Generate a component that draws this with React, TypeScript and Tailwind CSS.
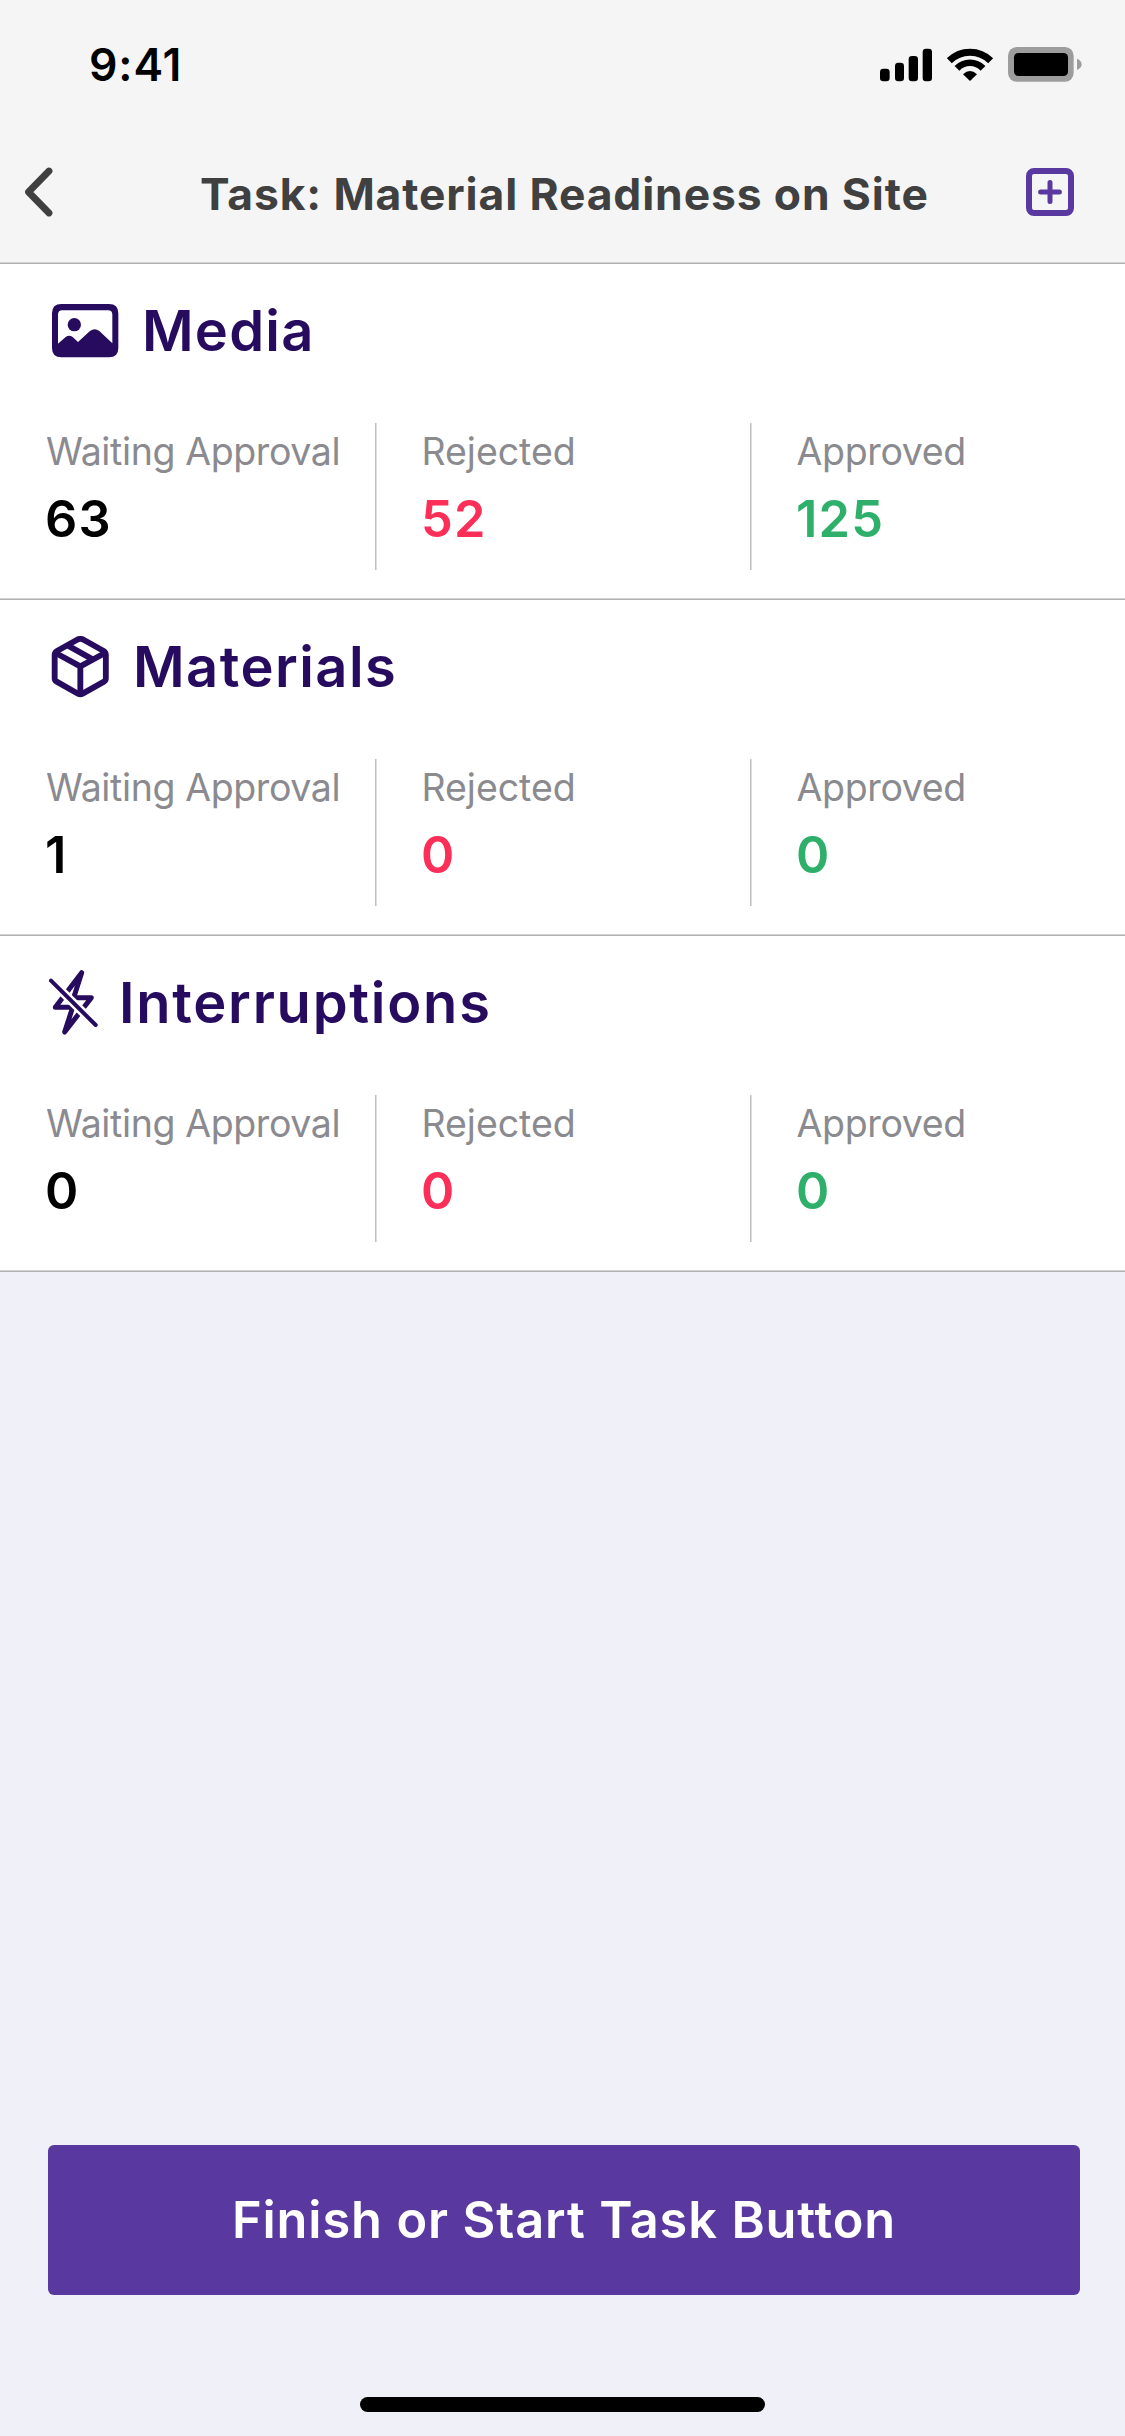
import type { ReactNode } from "react";

function StatusBar() {
  return (
    <div className="flex h-[122px] items-center pt-2 pr-[42px] pl-[89px]">
      <span className="text-[44.5px] leading-none font-semibold tracking-[0.9px] text-black">9:41</span>
      <div className="-mt-px ml-auto flex items-center">
        <svg className="h-[36px] w-[54px]" viewBox="30 39 162 108">
          <rect x="30" y="104" width="29" height="38" rx="10" />
          <rect x="75" y="86" width="27" height="56" rx="10" />
          <rect x="116" y="66" width="28" height="76" rx="10" />
          <rect x="158" y="44" width="28" height="98" rx="10" />
        </svg>
        <svg className="ml-[13px] h-[36px] w-[47px]" viewBox="231 39 141 108">
          <path d="M238 80 A88 88 0 0 1 362 80" fill="none" stroke="#000" strokeWidth="21" />
          <path d="M261 103 A54 54 0 0 1 339 103" fill="none" stroke="#000" strokeWidth="20" />
          <path d="M279 121 Q300 101 321 121 L300 141 Z" />
        </svg>
        <svg className="ml-[14px] h-[36px] w-[75px]" viewBox="414 39 225 108">
          <rect x="414" y="39" width="197" height="104" rx="26" fill="#9d9d9d" />
          <rect x="432" y="57" width="162" height="69" rx="13" />
          <path d="M621 74 Q635 80 635 91 Q635 102 621 108 Z" fill="#9d9d9d" />
        </svg>
      </div>
    </div>
  );
}

function Rule() {
  return (
    <div>
      <div className="h-px bg-[#d4d4d4]" />
      <div className="h-px bg-[#b0b0b0]" />
    </div>
  );
}

function MediaIcon() {
  return (
    <svg className="ml-[52px] h-[54px] w-[67px]" viewBox="36 42 201 162" fill="#260b5f">
      <path
        fillRule="evenodd"
        d="M64 42 H207 Q235 42 235 70 V174 Q235 202 207 202 H64 Q36 202 36 174 V70 Q36 42 64 42 Z M54 161 L77 141 Q87 133 98 141 L114 156 L150 123 Q164 112 178 123 L217 160 V74 Q217 61 204 61 H67 Q54 61 54 74 Z"
      />
      <circle cx="103" cy="104" r="20" />
    </svg>
  );
}

function BoxIcon() {
  return (
    <svg
      className="ml-[51px] h-[62px] w-[58px]"
      viewBox="35 33 174 186"
      fill="none"
      stroke="#260b5f"
      strokeWidth="17.5"
      strokeLinejoin="round"
    >
      <path d="M134 45 L193 78 Q199.500 82 199.500 90 V160 Q199.500 167 194 170 L130 206 Q123 210 116 206 L52 170 Q46 167 46 160 V90 Q46 82 53 78 L112 45 Q123 38 134 45 Z" />
      <path d="M49 84 L123 124 L197 84 M123 124 V206 M86 62 L160 103" />
    </svg>
  );
}

function BoltOffIcon() {
  return (
    <svg
      className="ml-[49px] h-[66px] w-[49px]"
      viewBox="27 30 147 198"
      fill="none"
      strokeLinecap="round"
      strokeLinejoin="round"
    >
      <path d="M125 38 L101 113 H154 L74 216 L98 142 H46 Z" stroke="#260b5f" strokeWidth="15" />
      <path d="M45 74 L155 183" stroke="#fff" strokeWidth="27" strokeLinecap="butt" />
      <path d="M33 62 L167 195" stroke="#260b5f" strokeWidth="12" />
    </svg>
  );
}

function Stat({
  label,
  value,
  tone,
  divided,
  labelClass = "tracking-[-0.38px]",
}: {
  label: string;
  value: number;
  tone: string;
  divided?: boolean;
  labelClass?: string;
}) {
  return (
    <div className="flex w-[375px]">
      <div className={divided ? "w-px bg-[#c0c0c0]" : "w-px"} />
      <div className={divided ? "w-px bg-[#dedede]" : "w-px"} />
      <div className={divided ? "pt-px pl-[44.5px]" : "pt-px pl-[44px]"}>
        <div className={`text-[37.5px] leading-[56px] whitespace-nowrap text-[#8a8a8f] ${labelClass}`}>{label}</div>
        <div
          className={`text-[50.5px] leading-[77px] font-semibold tracking-[1.2px] ${divided ? "-ml-[0.5px]" : "-ml-px"} ${tone}`}
        >
          {value}
        </div>
      </div>
    </div>
  );
}

function Section({
  icon,
  title,
  titleClass,
  counts,
}: {
  icon: ReactNode;
  title: string;
  titleClass: string;
  counts: [number, number, number];
}) {
  return (
    <section className="bg-white">
      <div className="flex h-[134px] items-center">
        {icon}
        <h2 className={`text-[56px] leading-none font-semibold text-[#260b5f] ${titleClass}`}>{title}</h2>
      </div>
      <div className="mt-[25px] mb-[28px] flex h-[147px]">
        <Stat label="Waiting Approval" value={counts[0]} tone="text-black" />
        <Stat label="Rejected" value={counts[1]} tone="text-[#fb2f58]" divided labelClass="tracking-[-0.05px]" />
        <Stat label="Approved" value={counts[2]} tone="text-[#2eb06a]" divided labelClass="tracking-[-0.35px]" />
      </div>
      <Rule />
    </section>
  );
}

export default function App() {
  return (
    <div className="flex h-[2436px] w-[1125px] flex-col overflow-hidden bg-[#f0f0f9] font-[Inter,sans-serif]">
      <header className="bg-[#f5f5f5]">
        <StatusBar />
        <div className="flex h-[140px] items-center pr-[51px] pl-[20px]">
          <svg className="h-[50px] w-[40px]" viewBox="0 0 40 50" fill="none">
            <path d="M29 4 L8.5 25 L29 46" stroke="#404040" strokeWidth="6.8" strokeLinecap="round" strokeLinejoin="round" />
          </svg>
          <h1 className="mt-[4px] ml-[140px] text-[44.4px] leading-none font-[650] tracking-[0.88px] whitespace-nowrap text-[#404040]">
            Task: Material Readiness on Site
          </h1>
          <svg className="ml-auto h-[48px] w-[48px]" viewBox="0 0 48 48" fill="none" stroke="#59389f">
            <rect x="3" y="3" width="42" height="42" rx="5" strokeWidth="6" />
            <path d="M24 14.6 V33.4 M14.6 24 H33.4" strokeWidth="5" strokeLinecap="round" />
          </svg>
        </div>
        <Rule />
      </header>
      <main>
        <Section icon={<MediaIcon />} title="Media" titleClass="ml-[23px] tracking-[1.2px]" counts={[63, 52, 125]} />
        <Section icon={<BoxIcon />} title="Materials" titleClass="ml-[24px] tracking-[1.45px]" counts={[1, 0, 0]} />
        <Section
          icon={<BoltOffIcon />}
          title="Interruptions"
          titleClass="ml-[21px] tracking-[1.75px]"
          counts={[0, 0, 0]}
        />
      </main>
      <footer className="mt-auto flex flex-col pb-[24px]">
        <button className="mr-[45px] ml-[48px] h-[150px] rounded-md bg-[#59389f] text-[50.5px] font-semibold tracking-[0.87px] text-white">
          Finish or Start Task Button
        </button>
        <div className="mt-[102px] h-[15px] w-[405px] self-center rounded-full bg-black" />
      </footer>
    </div>
  );
}
